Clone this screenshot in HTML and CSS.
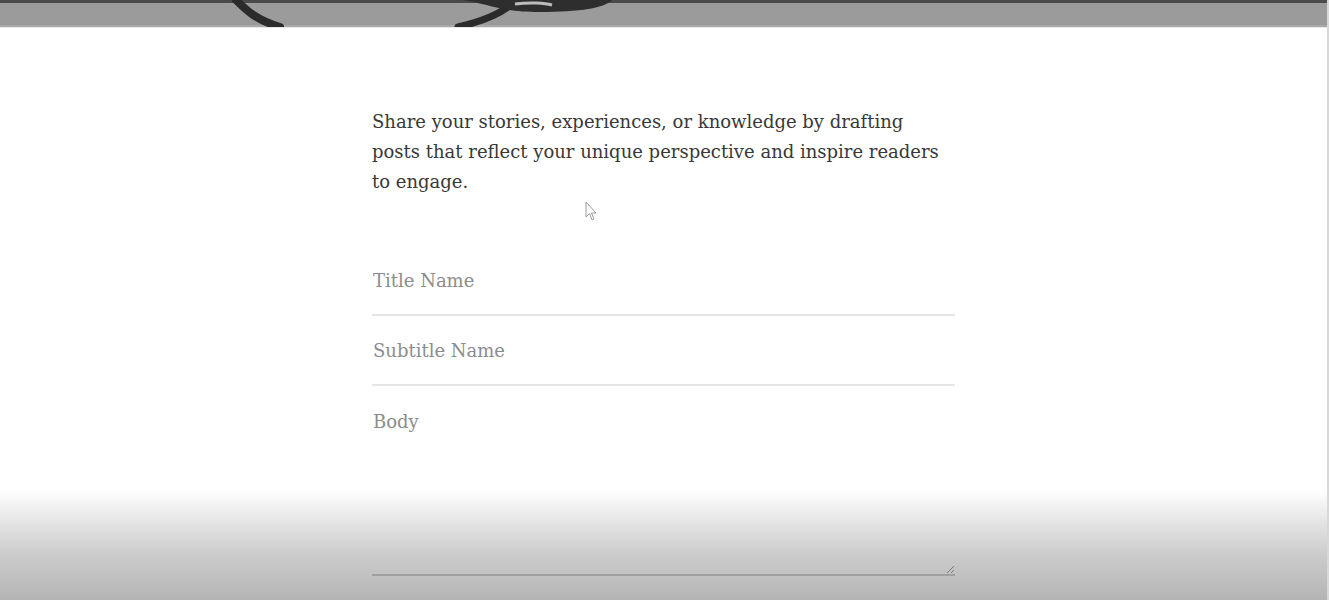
FILE: index.html
```html
<!DOCTYPE html>
<html lang="en">
<head>
<meta charset="utf-8">
<title>New Post</title>
<link rel="stylesheet" href="styles.css">
</head>
<body>
<div class="page">
  <header class="hero">
    <svg class="hero-art" width="1329" height="28" viewBox="0 0 1329 28" preserveAspectRatio="none">
      <rect x="0" y="0" width="1329" height="3" fill="#4a4a4a"/>
      <rect x="0" y="3" width="1329" height="25" fill="#9b9b9b"/>
      <rect x="0" y="25" width="1329" height="3" fill="#a9a9a9"/>
      <path d="M236 0 C 246 10, 256 20, 280 27" stroke="#2b2b2b" stroke-width="8" fill="none" stroke-linecap="round"/>
      <path d="M458 27 C 480 22, 500 14, 512 4" stroke="#2b2b2b" stroke-width="7" fill="none" stroke-linecap="round"/>
      <path d="M462 0 C 490 4, 500 12, 540 12 C 580 12, 605 8, 612 0 Z" fill="#2e2e2e"/>
      <path d="M515 4 C 530 2, 545 3, 552 5" stroke="#bdbdbd" stroke-width="3" fill="none"/>
    </svg>
  </header>

  <main class="content">
    <p class="intro">Share your stories, experiences, or knowledge by drafting posts that reflect your unique perspective and inspire readers to engage.</p>

    <form class="post-form">
      <input class="field" type="text" placeholder="Title Name">
      <input class="field" type="text" placeholder="Subtitle Name">
      <textarea class="field body" placeholder="Body"></textarea>
    </form>
  </main>

  <svg class="cursor" width="14" height="22" viewBox="0 0 14 22">
    <path d="M1 1 L1 16 L4.5 12.5 L7 19 L9 18 L6.5 12 L11 12 Z" fill="#fff" stroke="#9a9a9a" stroke-width="1"/>
  </svg>

  <div class="shade"></div>
</div>
</body>
</html>
```

FILE: styles.css
```css
* { box-sizing: border-box; }

html, body {
  margin: 0;
  padding: 0;
  background: #ffffff;
  height: 600px;
  overflow: hidden;
}

.page {
  position: relative;
  height: 600px;
  font-family: "DejaVu Serif", "Liberation Serif", serif;
  color: #333333;
  border-right: 2px solid #d8d8d8;
}

.hero {
  height: 28px;
  overflow: hidden;
  border-bottom: 1px solid #e8e8e8;
}

.hero-art {
  display: block;
}

.content {
  width: 584px;
  margin: 0 0 0 372px;
  padding-top: 79px;
}

.intro {
  margin: 0;
  font-size: 18px;
  line-height: 30px;
  color: #383838;
  width: 584px;
}

.post-form {
  display: flex;
  flex-direction: column;
  margin-top: 49px;
}

.field {
  display: block;
  width: 583px;
  height: 70px;
  margin: 0;
  padding: 0 0 0 1px;
  border: none;
  border-bottom: 2px solid #e6e6e6;
  outline: none;
  background: transparent;
  font-family: "DejaVu Serif", "Liberation Serif", serif;
  font-size: 18px;
  color: #333;
}

.field::placeholder {
  color: #8c8c8c;
}

.field.body {
  height: 190px;
  padding-top: 26px;
  resize: vertical;
  border-bottom: 2px solid #b8b8b8;
  line-height: 20px;
}

.cursor {
  position: absolute;
  left: 585px;
  top: 201px;
}

.shade {
  position: absolute;
  left: 0;
  right: 0;
  bottom: 0;
  height: 110px;
  background: linear-gradient(to bottom, rgba(140,140,140,0) 0%, rgba(140,140,140,0.2) 25%, rgba(140,140,140,0.45) 60%, rgba(140,140,140,0.65) 100%);
  pointer-events: none;
}
```
